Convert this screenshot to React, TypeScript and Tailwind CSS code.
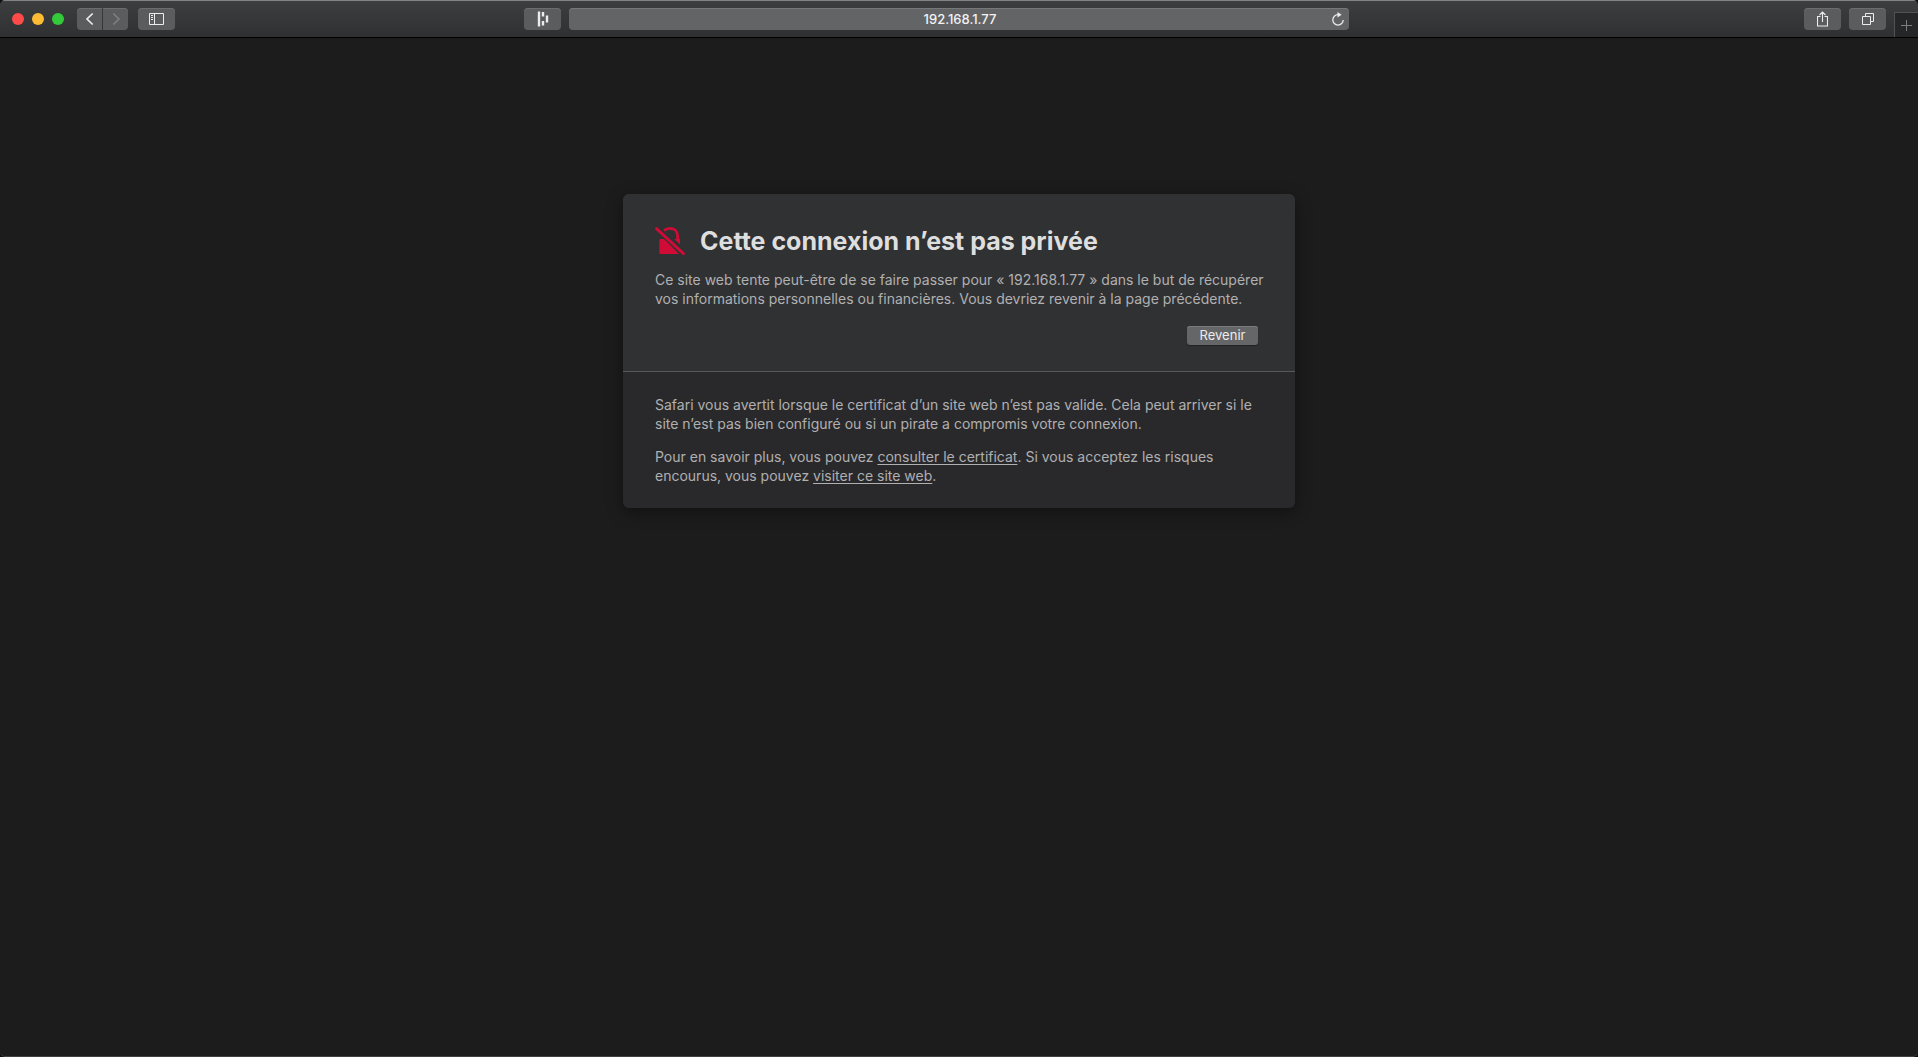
import React from "react";

const toolButton =
  "flex h-[22px] items-center justify-center bg-[#5b5c5e] text-[#ececec] shadow-[inset_0_1px_0_#6c6d6f]";

function TrafficLights() {
  return (
    <div className="flex gap-2">
      <button type="button" aria-label="Fermer" className="size-3 rounded-full bg-[#fc4b48]" />
      <button type="button" aria-label="Réduire" className="size-3 rounded-full bg-[#fdbc33]" />
      <button type="button" aria-label="Agrandir" className="size-3 rounded-full bg-[#34c93a]" />
    </div>
  );
}

function BrokenLock() {
  return (
    <svg className="h-7 w-[30px] shrink-0" viewBox="0 0 30 28" aria-hidden="true">
      <path
        d="M9 3.6C10.8 2 12.8 1.4 15 1.4C19.4 1.4 22.6 4.3 22.6 8.8V14"
        fill="none"
        stroke="#d00c36"
        strokeWidth="2.8"
      />
      <path d="M19.3 12H25V17.6ZM4.4 13.4C4.4 12.5 5 12 6 12H9.3L24 27H5.4C4.7 27 4.4 26.6 4.4 26Z" fill="#d00c36" />
      <path d="M1.5 1.6L28.5 26.6" stroke="#303133" strokeWidth="5" />
      <path d="M1.5 1.6L28.5 26.6" stroke="#d00c36" strokeWidth="2.8" strokeLinecap="round" />
    </svg>
  );
}

function Toolbar() {
  return (
    <header className="grid h-[38px] grid-cols-[524fr_825fr_569fr] border-t border-b border-t-[#818485] border-b-black bg-linear-to-b from-[#3c3e40] to-[#2f3032]">
      <div className="flex items-start pt-[7px] pl-3">
        <div className="flex h-[22px] items-center">
          <TrafficLights />
        </div>
        <div className="ml-[13px] flex gap-px">
          <button type="button" aria-label="Page précédente" className={`${toolButton} w-[25px] rounded-l-[4px]`}>
            <svg className="size-3.5" viewBox="0 0 14 14" fill="none" stroke="currentColor" strokeWidth="1.7">
              <path d="M9.7 1.5L4 7L9.7 12.5" />
            </svg>
          </button>
          <button
            type="button"
            disabled
            aria-label="Page suivante"
            className={`${toolButton} w-[25px] rounded-r-[4px]`}
          >
            <svg className="size-3.5" viewBox="0 0 14 14" fill="none" stroke="#808183" strokeWidth="1.5">
              <path d="M4.3 1.5L10 7L4.3 12.5" />
            </svg>
          </button>
        </div>
        <button type="button" aria-label="Barre latérale" className={`${toolButton} ml-2.5 w-[37px] rounded-[4px]`}>
          <svg className="h-3 w-[15px]" viewBox="0 0 15 12" fill="none" stroke="currentColor">
            <path d="M0.5 0.5H14.5V11.5H0.5ZM5.5 0.5V11.5M2 2.5H4M2 4.5H4M2 6.5H4" />
          </svg>
        </button>
      </div>

      <div className="flex items-start gap-2 pt-[7px]">
        <button type="button" aria-label="Extension" className={`${toolButton} w-[37px] shrink-0 rounded-[4px]`}>
          <svg className="h-4 w-3" viewBox="0 0 12 16" fill="none" stroke="currentColor" strokeWidth="2.4">
            <path d="M2 0.5V15.5M6 1V5.5M6 10V14.5M10 4.5V11.5" />
          </svg>
        </button>
        <div className="relative flex-1">
          <input
            type="text"
            aria-label="Adresse"
            defaultValue="192.168.1.77"
            className="block h-[22px] w-full rounded-[4px] bg-[#636466] pr-8 pl-[34px] text-center text-[13px] leading-[22px] font-medium text-[#f2f2f2] shadow-[inset_0_1px_0_#77787a] outline-none"
          />
          <button type="button" aria-label="Recharger" className="absolute top-1 right-[5px] text-[#ececec]">
            <svg className="block h-3.5 w-3" viewBox="0 0 12 14" fill="none" stroke="currentColor" strokeWidth="1.3">
              <path d="M7 2.7H6A5.2 5.2 0 1 0 11.2 7.9" />
              <path d="M5.5 0L9.6 2.8L5.5 5.6Z" fill="currentColor" stroke="none" />
            </svg>
          </button>
        </div>
      </div>

      <div className="flex items-start justify-end gap-2 pt-[7px]">
        <button type="button" aria-label="Partager" className={`${toolButton} w-[37px] rounded-[4px]`}>
          <svg className="h-4 w-[11px]" viewBox="0 0 11 16" fill="none" stroke="currentColor" strokeWidth="1.1">
            <path d="M3.5 5.5H0.5V15H10.5V5.5H7.5M5.5 11V1.2M2.5 4L5.5 1L8.5 4" />
          </svg>
        </button>
        <button type="button" aria-label="Afficher les onglets" className={`${toolButton} w-[37px] rounded-[4px]`}>
          <svg className="size-3" viewBox="0 0 12 12" fill="none" stroke="currentColor">
            <path d="M0.5 3.5H8.5V11.5H0.5ZM3.5 3V0.5H11.5V8.5H9" />
          </svg>
        </button>
        <button
          type="button"
          aria-label="Nouvel onglet"
          className="mt-1 flex h-[25px] w-6 items-center justify-center border-t border-l border-[#515254] bg-[#252628] text-[#7c7d7f]"
        >
          <svg className="size-[11px]" viewBox="0 0 11 11" fill="none" stroke="currentColor">
            <path d="M5.5 0V11M0 5.5H11" />
          </svg>
        </button>
      </div>
    </header>
  );
}

export default function App() {
  return (
    <div className="bg-[#0c0d14]">
      <div className="flex min-h-screen flex-col overflow-hidden rounded-[5px] border-b border-[#414141] bg-[#1c1c1c] font-['Inter','Liberation_Sans',sans-serif]">
        <Toolbar />
        <main className="flex-1 px-4 pt-39">
          <article className="mx-auto max-w-2xl overflow-hidden rounded-md bg-[#29292b] text-sm leading-[19px] text-[#b0b0b1] shadow-[0_4px_16px_rgba(0,0,0,0.4)]">
            <section className="border-b border-[#58595b] bg-[#303133] pt-[29px] pr-5 pb-[26px] pl-8">
              <div className="flex items-center gap-[15px]">
                <BrokenLock />
                <h1 className="text-[25px] leading-9 font-bold text-[#dededf]">Cette connexion n’est pas privée</h1>
              </div>
              <p className="mt-[11px]">
                Ce site web tente peut-être de se faire passer pour « 192.168.1.77 » dans le but de récupérer vos
                informations personnelles ou financières. Vous devriez revenir à la page précédente.
              </p>
              <div className="mt-[18px] flex justify-end pr-[17px]">
                <button
                  type="button"
                  className="h-[19px] w-[71px] rounded-[3px] bg-[#656668] text-[13px] leading-[19px] text-[#ececec] shadow-[inset_0_1px_0_#7a7b7d,0_1px_1px_rgba(0,0,0,0.3)]"
                >
                  Revenir
                </button>
              </div>
            </section>
            <section className="py-[23px] pr-8 pl-8">
              <p>
                Safari vous avertit lorsque le certificat d’un site web n’est pas valide. Cela peut arriver si le site
                n’est pas bien configuré ou si un pirate a compromis votre connexion.
              </p>
              <p className="mt-3.5">
                Pour en savoir plus, vous pouvez{" "}
                <a href="#certificat" className="underline underline-offset-2">
                  consulter le certificat
                </a>
                . Si vous acceptez les risques encourus, vous pouvez{" "}
                <a href="#visiter" className="underline underline-offset-2">
                  visiter ce site web
                </a>
                .
              </p>
            </section>
          </article>
        </main>
      </div>
    </div>
  );
}
